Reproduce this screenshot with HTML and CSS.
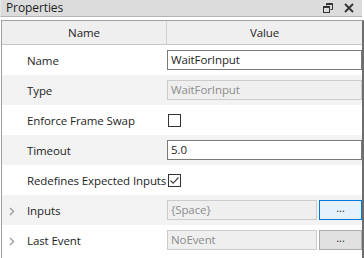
FILE: index.html
```html
<!DOCTYPE html>
<html>
<head>
<meta charset="utf-8">
<link rel="stylesheet" href="styles.css">
</head>
<body>
<div class="panel">
  <div class="titlebar">
    <span class="title">Properties</span>
    <span class="tools">
      <svg class="ico" width="10" height="10" viewBox="0 0 10 10"><path d="M3.5 0.5h6v6h-2" fill="none" stroke="#333" stroke-width="1"/><path d="M3.5 0.5v2" stroke="#333"/><rect x="0.5" y="3.5" width="6" height="6" fill="none" stroke="#333"/><rect x="0.5" y="3.5" width="6" height="1.5" fill="#333"/><rect x="3.5" y="0.5" width="6" height="1.5" fill="#333"/></svg>
      <svg class="ico" width="10" height="10" viewBox="0 0 10 10"><path d="M1 1L9 9M9 1L1 9" stroke="#333" stroke-width="1.8"/></svg>
    </span>
  </div>
  <div class="grid">
    <div class="hdr">
      <div class="hcell name-col">Name</div>
      <div class="hcell">Value</div>
    </div>
    <div class="row">
      <div class="label">Name</div>
      <div class="val"><div class="box edit">WaitForInput</div></div>
    </div>
    <div class="row alt">
      <div class="label">Type</div>
      <div class="val"><div class="box ro">WaitForInput</div></div>
    </div>
    <div class="row">
      <div class="label">Enforce Frame Swap</div>
      <div class="val"><span class="check"></span></div>
    </div>
    <div class="row alt">
      <div class="label">Timeout</div>
      <div class="val"><div class="box edit">5.0</div></div>
    </div>
    <div class="row">
      <div class="label">Redefines Expected Inputs</div>
      <div class="val"><span class="check"><svg width="11" height="11" viewBox="0 0 11 11"><path d="M1.5 5.5L4.2 8.2L9.5 2.5" fill="none" stroke="#444" stroke-width="1.2"/></svg></span></div>
    </div>
    <div class="row alt">
      <div class="label"><svg class="chev" width="6" height="9" viewBox="0 0 6 9"><path d="M1 1L4.5 4.5L1 8" fill="none" stroke="#9a9a9a" stroke-width="1.3"/></svg>Inputs</div>
      <div class="val"><div class="box ro grow">{Space}</div><div class="btn focus">...</div></div>
    </div>
    <div class="row">
      <div class="label"><svg class="chev" width="6" height="9" viewBox="0 0 6 9"><path d="M1 1L4.5 4.5L1 8" fill="none" stroke="#9a9a9a" stroke-width="1.3"/></svg>Last Event</div>
      <div class="val"><div class="box ro grow">NoEvent</div><div class="btn">...</div></div>
    </div>
  </div>
</div>
</body>
</html>
```
FILE: styles.css
```css
html, body {
  margin: 0;
  padding: 0;
  background: #ffffff;
}
body {
  width: 364px;
  height: 258px;
  overflow: hidden;
  font-family: "Open Sans", "Noto Sans", sans-serif;
  font-size: 11.5px;
  letter-spacing: -0.1px;
  color: #1e1e1e;
}
.panel {
  display: flex;
  flex-direction: column;
  height: 258px;
}
.titlebar {
  height: 16px;
  margin-right: 2px;
  background: #dcdcdc;
  border-bottom: 1px solid #b4b4b4;
  border-left: 1px solid #e8e8e8;
  display: flex;
  align-items: center;
  justify-content: space-between;
  padding-left: 5px;
}
.title {
  font-size: 12px;
  color: #1e1e1e;
  line-height: 16px;
}
.tools {
  display: flex;
  gap: 11px;
  padding-right: 8px;
  align-items: center;
}
.ico { display: block; }
.grid {
  margin-top: 3px;
  flex: 1;
  border-left: 1px solid #a0a0a0;
  border-right: 2px solid #6e6e6e;
  margin-left: 1px;
  border-top: 1px solid #a0a0a0;
  display: flex;
  flex-direction: column;
}
.hdr {
  display: flex;
  height: 23px;
  background: #efefef;
  border-bottom: 1px solid #c8c8c8;
}
.hcell {
  flex: 1;
  display: flex;
  align-items: center;
  justify-content: center;
  color: #1e1e1e;
}
.hcell.name-col {
  flex: 0 0 164px;
  border-right: 1px solid #d2d2d2;
}
.row {
  display: flex;
  height: 30px;
  align-items: center;
}
.row.alt { background: #f3f3f3; }
.label {
  flex: 0 0 165px;
  padding-left: 25px;
  box-sizing: border-box;
  position: relative;
  white-space: nowrap;
}
.chev {
  position: absolute;
  left: 7px;
  top: 4px;
  display: block;
}
.val {
  flex: 1;
  display: flex;
  align-items: center;
  gap: 2px;
}
.box {
  flex: 1;
  height: 18px;
  line-height: 18px;
  padding-left: 3px;
  white-space: nowrap;
}
.box.edit {
  border: 1px solid #7a7a7a;
  background: #ffffff;
  color: #1e1e1e;
}
.box.ro {
  border: 1px solid #cccccc;
  background: #efefef;
  color: #8c8c8c;
}
.btn {
  flex: 0 0 41px;
  height: 18px;
  line-height: 14px;
  text-align: center;
  border: 1px solid #adadad;
  background: #e1e1e1;
  color: #1e1e1e;
  font-size: 11px;
}
.btn.focus {
  border-color: #0078d7;
  background: #e5f1fb;
}
.check {
  width: 11px;
  height: 11px;
  border: 1px solid #333333;
  background: #ffffff;
  margin-left: 1px;
  display: flex;
}
.check svg { display: block; }
```
